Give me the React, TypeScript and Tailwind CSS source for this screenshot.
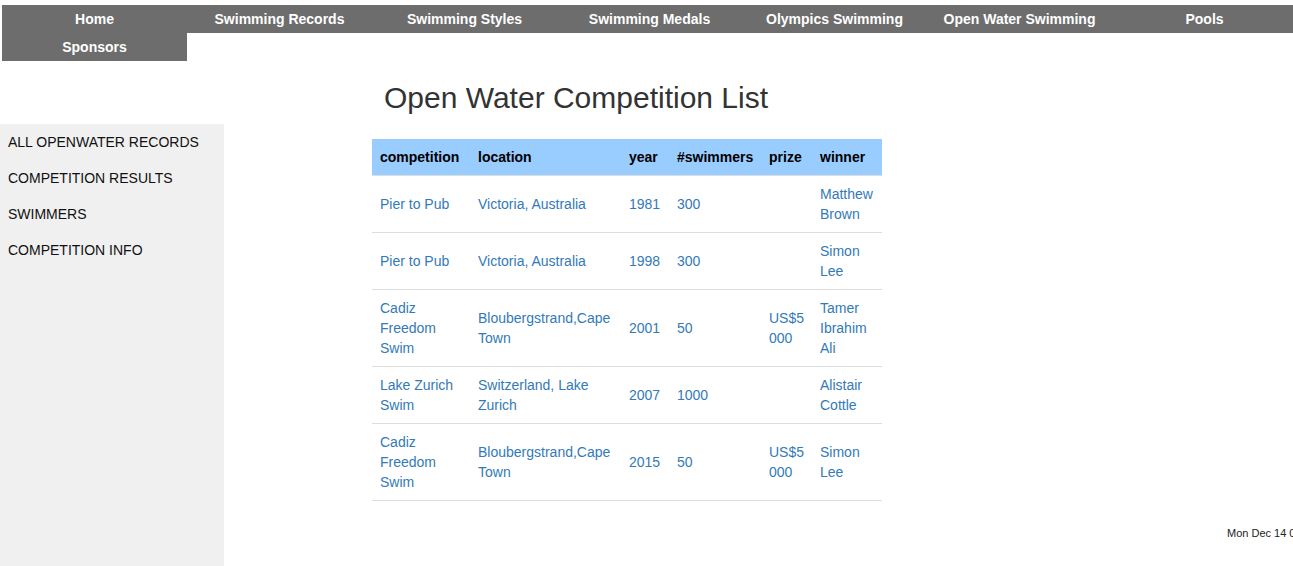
import React from 'react';

const navItems = [
  'Home',
  'Swimming Records',
  'Swimming Styles',
  'Swimming Medals',
  'Olympics Swimming',
  'Open Water Swimming',
  'Pools',
  'Sponsors',
];

const sideLinks = ['ALL OPENWATER RECORDS', 'COMPETITION RESULTS', 'SWIMMERS', 'COMPETITION INFO'];

const rows = [
  { competition: 'Pier to Pub', location: 'Victoria, Australia', year: '1981', swimmers: '300', prize: '', winner: 'Matthew Brown' },
  { competition: 'Pier to Pub', location: 'Victoria, Australia', year: '1998', swimmers: '300', prize: '', winner: 'Simon Lee' },
  { competition: 'Cadiz Freedom Swim', location: 'Bloubergstrand,Cape Town', year: '2001', swimmers: '50', prize: 'US$5000', winner: 'Tamer Ibrahim Ali' },
  { competition: 'Lake Zurich Swim', location: 'Switzerland, Lake Zurich', year: '2007', swimmers: '1000', prize: '', winner: 'Alistair Cottle' },
  { competition: 'Cadiz Freedom Swim', location: 'Bloubergstrand,Cape Town', year: '2015', swimmers: '50', prize: 'US$5000', winner: 'Simon Lee' },
];

const App = () => {
  return (
    <div className="w-[1293px] h-[566px] overflow-hidden bg-white text-[#333] font-['Liberation_Sans',Arial,sans-serif] text-[14px] leading-[20px]">
      <div className="pt-[5px] pl-[2px] w-[1310px]">
        <ul className="flex flex-wrap">
          {navItems.map((item) => (
            <li
              key={item}
              className="w-[185px] h-[28px] bg-[#6d6d6d] text-white font-bold text-[14px] leading-[28px] text-center"
            >
              {item}
            </li>
          ))}
        </ul>
      </div>

      <div className="flex">
        <aside className="w-[224px] shrink-0 mt-[63px] h-[442px] bg-[#f0f0f0] text-[#111]">
          {sideLinks.map((link) => (
            <div key={link} className="px-[8px] py-[8px] leading-[20px]">
              {link}
            </div>
          ))}
        </aside>

        <main className="flex-1 pl-[148px]">
          <h2 className="mt-[20px] ml-[12px] text-[30px] leading-[33px] font-normal text-[#333]">
            Open Water Competition List
          </h2>

          <table className="mt-[25px] w-[510px] table-fixed border-collapse">
            <colgroup>
              <col className="w-[98px]" />
              <col className="w-[151px]" />
              <col className="w-[48px]" />
              <col className="w-[92px]" />
              <col className="w-[51px]" />
              <col className="w-[70px]" />
            </colgroup>
            <thead>
              <tr className="bg-[#99ccff] text-black">
                <th className="p-[8px] text-left font-bold">competition</th>
                <th className="p-[8px] text-left font-bold">location</th>
                <th className="p-[8px] text-left font-bold">year</th>
                <th className="p-[8px] text-left font-bold">#swimmers</th>
                <th className="p-[8px] text-left font-bold">prize</th>
                <th className="p-[8px] text-left font-bold">winner</th>
              </tr>
            </thead>
            <tbody className="text-[#337ab7]">
              {rows.map((r, i) => (
                <tr key={i} className="border-t border-b border-[#ddd]">
                  <td className="p-[8px] align-middle">{r.competition}</td>
                  <td className="p-[8px] align-middle">{r.location}</td>
                  <td className="p-[8px] align-middle">{r.year}</td>
                  <td className="p-[8px] align-middle">{r.swimmers}</td>
                  <td className="py-[8px] pl-[8px] pr-[7px] align-middle break-words">{r.prize}</td>
                  <td className="p-[8px] align-middle">{r.winner}</td>
                </tr>
              ))}
            </tbody>
          </table>

          <div className="mt-[24px] pl-[1003px] ml-[-148px] whitespace-nowrap text-[11px] leading-[16px] text-[#222]">
            Mon Dec 14 09:41:27 GMT 2015
          </div>
        </main>
      </div>
    </div>
  );
};

export default App;
